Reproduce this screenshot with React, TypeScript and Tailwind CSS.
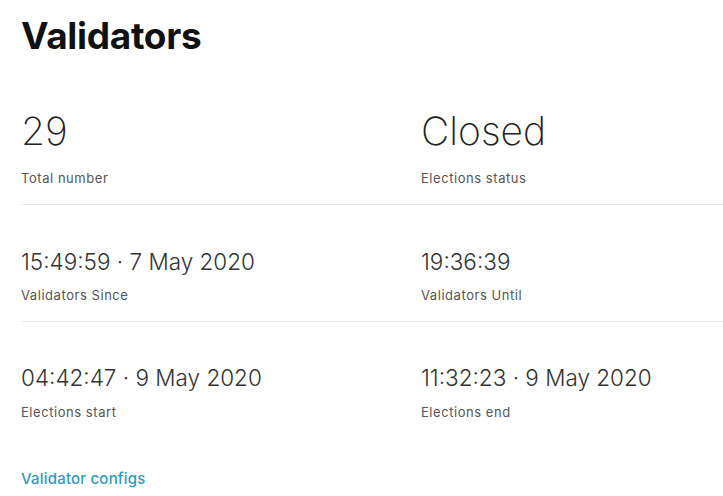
import React from 'react';

type Stat = { value: string; label: string };

const rows: Stat[][] = [
  [
    { value: '29', label: 'Total number' },
    { value: 'Closed', label: 'Elections status' },
  ],
  [
    { value: '15:49:59 · 7 May 2020', label: 'Validators Since' },
    { value: '19:36:39', label: 'Validators Until' },
  ],
  [
    { value: '04:42:47 · 9 May 2020', label: 'Elections start' },
    { value: '11:32:23 · 9 May 2020', label: 'Elections end' },
  ],
];

const rowClasses = [
  'border-b border-[#e8e8e8] pb-[18px]',
  'border-b border-[#e8e8e8] pt-[41px] pb-[18px]',
  'pt-[40px]',
];

const labelGap = ['mt-[15px]', 'mt-[9px]', 'mt-[10px]'];

const StatCell = ({ stat, row }: { stat: Stat; row: number }) => (
  <div className="flex flex-col">
    <div
      className={
        row === 0
          ? 'text-[39px] leading-[48px] font-extralight text-[#222]'
          : 'text-[22.5px] leading-[32px] font-light text-[#333]'
      }
    >
      {stat.value}
    </div>
    <div className={'text-[13px] leading-[16px] text-[#555] tracking-[0.55px] ' + labelGap[row]}>
      {stat.label}
    </div>
  </div>
);

export default function App() {
  return (
    <div className="min-h-screen bg-white pl-[21px] overflow-hidden" style={{ fontFamily: 'Inter, "Noto Sans", sans-serif' }}>
      <h1 className="pt-[14px] text-[37px] leading-[44px] font-bold text-[#111] tracking-[-0.3px]">Validators</h1>
      <div className="mt-[49px]">
        {rows.map((row, i) => (
          <div key={i} className={'grid grid-cols-[400px_1fr] ' + rowClasses[i]}>
            {row.map((s) => (
              <StatCell key={s.label} stat={s} row={i} />
            ))}
          </div>
        ))}
      </div>
      <a href="#" className="block mt-[50px] text-[15px] leading-[18px] font-medium text-[#2f9bc1] tracking-[0.2px]">
        Validator configs
      </a>
    </div>
  );
}
